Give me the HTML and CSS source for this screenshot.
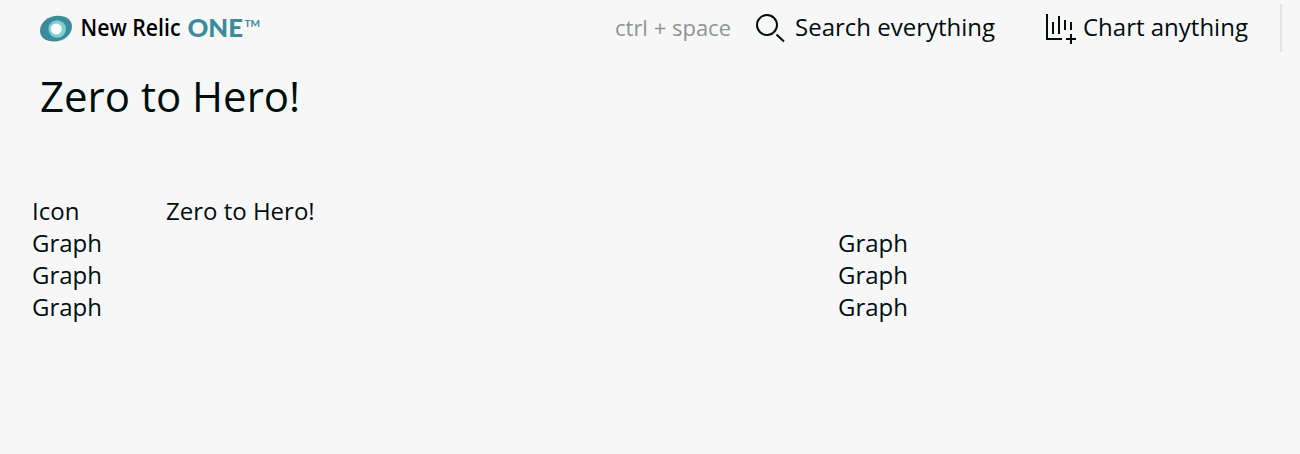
FILE: index.html
```html
<!DOCTYPE html>
<html lang="en">
<head>
<meta charset="utf-8">
<title>New Relic ONE</title>
<link rel="stylesheet" href="styles.css">
</head>
<body>
<header class="topbar">
  <div class="brand">
    <svg class="brand-mark" viewBox="0 0 32 48" width="32" height="48">
      <path d="M18 11.8C26 11.8 32 15.8 32 22.6C32 30.8 24 37.6 14 37.6C6 37.6 0 33.6 0 26.8C0 18.6 8 11.8 18 11.8Z" fill="#3a8c9a"/>
      <circle cx="17.2" cy="25" r="8.8" fill="#80cdd2"/>
      <circle cx="16.3" cy="25" r="5.5" fill="#f9ffff"/>
    </svg>
    <svg class="brand-name" width="190" height="48" viewBox="0 0 190 48">
      <text class="brand-main" x="1.5" y="32" textLength="100" lengthAdjust="spacingAndGlyphs">New Relic</text>
      <text class="brand-one" x="108.5" y="33.3" textLength="55.5" lengthAdjust="spacingAndGlyphs">ONE</text>
      <text class="brand-tm" x="165.5" y="22.5" textLength="15.5" lengthAdjust="spacingAndGlyphs">TM</text>
    </svg>
  </div>
  <span class="shortcut">ctrl + space</span>
  <a class="action search">
    <svg width="30" height="30" viewBox="0 0 30 30"><circle cx="11" cy="12" r="10"/><path d="M20.5 21.5 28 28.5"/></svg>
    <span class="label">Search everything</span>
  </a>
  <a class="action chart">
    <svg width="30" height="32" viewBox="0 0 30 32"><path d="M1 2v25h15M7 10v12M13 4v18M19 8v10M25 10v8M25 22v10M20 27h10"/></svg>
    <span class="label">Chart anything</span>
  </a>
</header>
<h1 class="title">Zero to Hero!</h1>
<main class="grid">
  <div class="cell icon-cell">Icon</div><div class="cell heading-cell">Zero to Hero!</div>
  <div class="cell left">Graph</div><div class="cell">Graph</div>
  <div class="cell left">Graph</div><div class="cell">Graph</div>
  <div class="cell left">Graph</div><div class="cell">Graph</div>
</main>
</body>
</html>
```

FILE: styles.css
```css
body { margin: 0; height: 454px; overflow: hidden; background: #f7f7f7; color: #000e0e; font-family: "Open Sans", sans-serif; font-size: 24px; line-height: 32px; }
.topbar { display: flex; align-items: center; box-sizing: border-box; height: 48px; width: 1242px; margin: 4px 0 0 40px; border-right: 2px solid #e3e4e4; }
.brand { display: flex; align-items: center; width: 575px; gap: 7px; }
.brand-mark, .brand-name { flex: none; overflow: visible; }
.brand-name { line-height: 1; margin-left: -0.5px; }
.brand-main { font-size: 24px; font-weight: 600; font-stretch: 88%; fill: #000; }
.brand-one { font-family: Lato, sans-serif; font-size: 24.5px; font-weight: 900; fill: #3a8c9a; }
.brand-tm { font-family: Lato, sans-serif; font-size: 9.5px; font-weight: 700; fill: #3a8c9a; }
.shortcut { width: 141px; color: #8e9494; font-size: 22px; white-space: nowrap; padding-bottom: 2px; }
.action { display: flex; align-items: center; gap: 9px; white-space: nowrap; }
.action svg { fill: none; stroke: #000e0e; stroke-width: 2; }
.label { padding-bottom: 2px; }
.search { width: 290px; }
.chart { gap: 7px; }
.title { margin: 16px 0 0 40px; font-size: 42px; line-height: 56px; font-weight: 400; }
.grid { display: grid; grid-template-columns: 134px 672px 1fr; margin: 71px 0 0 32px; }
.heading-cell { grid-column: 2 / 4; }
.left { grid-column: 1 / 3; }
```
